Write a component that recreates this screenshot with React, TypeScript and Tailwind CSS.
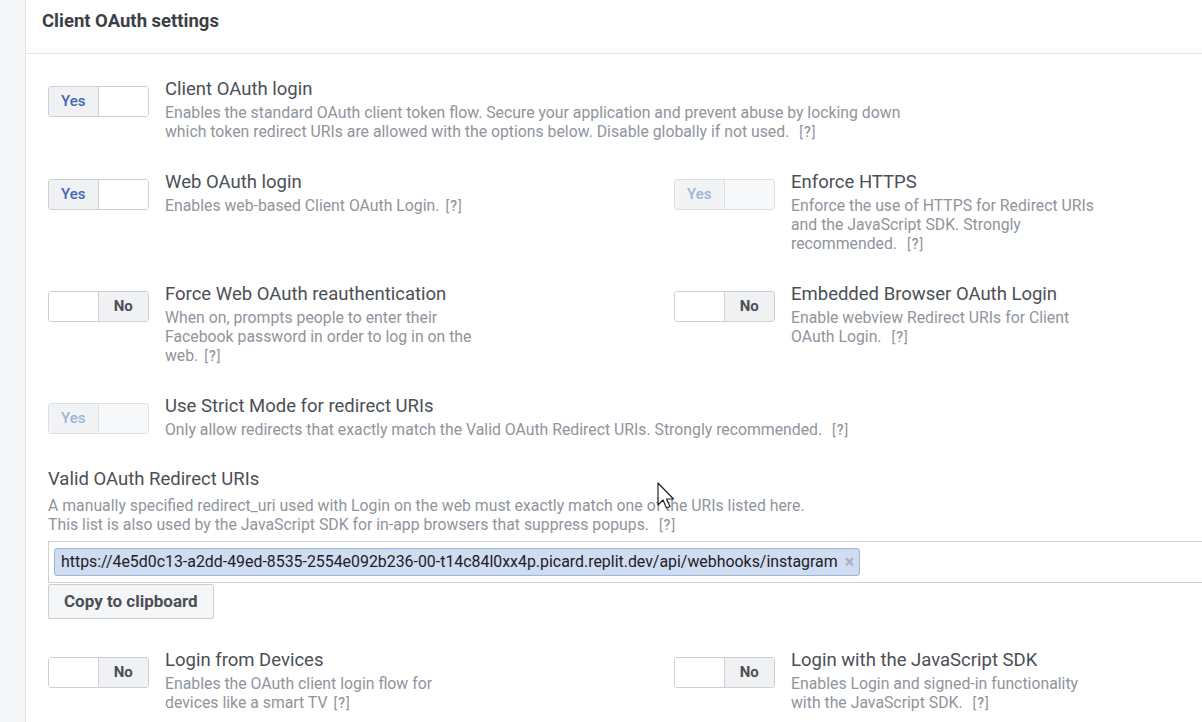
import React from "react";

function Help() {
  return <span className="ml-[6px] text-[14px] tracking-[1px] text-[#90949c]">[<span className="font-medium">?</span>]</span>;
}

function Toggle({ on, disabled }: { on: boolean; disabled?: boolean }) {
  const border = disabled ? "border-[#dddfe2]" : "border-[#ccd0d5]";
  const activeBg = disabled ? "bg-[#f2f3f5]" : "bg-[#f0f1f3]";
  const yesColor = disabled ? "text-[#9cb4d8]" : "text-[#4267b2]";
  return (
    <div className={`flex h-[31px] w-[101px] shrink-0 overflow-hidden rounded-[3px] border ${border} bg-white`}>
      {on ? (
        <>
          <div className={`flex w-1/2 items-center justify-center border-r ${border} ${activeBg} text-[15px] font-medium ${yesColor}`}>Yes</div>
          <div className={`w-1/2 ${disabled ? "bg-[#f7f8fa]" : "bg-white"}`} />
        </>
      ) : (
        <>
          <div className={`w-1/2 border-r ${border} bg-white`} />
          <div className={`flex w-1/2 items-center justify-center ${activeBg} text-[15px] font-bold text-[#4b4f56]`}>No</div>
        </>
      )}
    </div>
  );
}

function Setting({
  title,
  desc,
  on,
  disabled,
  width = "w-[318px]",
}: {
  title: string;
  desc: React.ReactNode;
  on: boolean;
  disabled?: boolean;
  width?: string;
}) {
  return (
    <div className="flex">
      <div className="pt-[8px]">
        <Toggle on={on} disabled={disabled} />
      </div>
      <div className={`ml-[16px] ${width}`}>
        <div className="text-[18.5px] leading-[22px] text-[#4b4f56]">{title}</div>
        <div className="mt-[3px] text-[15.8px] leading-[19px] text-[#90949c]">
          {desc}
          <Help />
        </div>
      </div>
    </div>
  );
}

export default function App() {
  return (
    <div
      className="relative flex h-[722px] w-[1202px] overflow-hidden bg-white"
      style={{ fontFamily: "Roboto, 'Liberation Sans', Arial, sans-serif" }}
    >
      <div className="h-full w-[26px] shrink-0 border-r border-[#e5e6e9] bg-[#f5f6f7]" />
      <div className="flex min-w-0 flex-1 flex-col">
        <div className="h-[54px] shrink-0 border-b border-[#e5e6e9] pl-[16px] pt-[10px]">
          <div className="text-[18.5px] font-bold leading-[22px] text-[#3b3f46]">Client OAuth settings</div>
        </div>
        <div className="flex flex-col pl-[22px] pt-[24px]">
          <div className="flex flex-col gap-[29px]">
            <Setting
              on
              title="Client OAuth login"
              width="w-[760px]"
              desc="Enables the standard OAuth client token flow. Secure your application and prevent abuse by locking down which token redirect URIs are allowed with the options below. Disable globally if not used. "
            />
            <div className="grid grid-cols-[626px_1fr]">
              <Setting on title="Web OAuth login" desc="Enables web-based Client OAuth Login." />
              <Setting
                on
                disabled
                width="w-[316px]"
                title="Enforce HTTPS"
                desc="Enforce the use of HTTPS for Redirect URIs and the JavaScript SDK. Strongly recommended. "
              />
            </div>
            <div className="grid grid-cols-[626px_1fr]">
              <Setting
                on={false}
                title="Force Web OAuth reauthentication"
                desc="When on, prompts people to enter their Facebook password in order to log in on the web."
              />
              <Setting
                on={false}
                width="w-[316px]"
                title="Embedded Browser OAuth Login"
                desc="Enable webview Redirect URIs for Client OAuth Login. "
              />
            </div>
            <Setting
              on
              disabled
              title="Use Strict Mode for redirect URIs"
              width="w-[760px]"
              desc="Only allow redirects that exactly match the Valid OAuth Redirect URIs. Strongly recommended. "
            />
          </div>

          <div className="mt-[28px] text-[18.5px] leading-[22px] text-[#4b4f56]">Valid OAuth Redirect URIs</div>
          <div className="mt-[6px] text-[15.8px] leading-[19px] text-[#90949c]">
            A manually specified redirect_uri used with Login on the web must exactly match one of the URIs listed here.
            <br />
            This list is also used by the JavaScript SDK for in-app browsers that suppress popups. <Help />
          </div>
          <div className="mt-[6px] flex h-[42px] w-[1200px] items-center border-y border-l border-[#ccd0d5] bg-white pl-[5px]">
            <div className="flex h-[28px] items-center rounded-[3px] border border-[#9cb4d8] bg-[#d0dcf0] pl-[6px] pr-[5px] text-[15.9px] text-[#1d2129]">
              <span>https://4e5d0c13-a2dd-49ed-8535-2554e092b236-00-t14c84l0xx4p.picard.replit.dev/api/webhooks/instagram</span>
              <span className="ml-[7px] text-[18px] font-bold leading-none text-[#a7b1c2]">×</span>
            </div>
          </div>
          <div className="mt-[1px]">
            <button className="h-[35px] rounded-[2px] border border-[#ccd0d5] bg-[#f5f6f7] px-[15px] text-[17px] font-bold text-[#4b4f56]">
              Copy to clipboard
            </button>
          </div>

          <div className="mt-[30px] grid grid-cols-[626px_1fr]">
            <Setting
              on={false}
              title="Login from Devices"
              desc="Enables the OAuth client login flow for devices like a smart TV"
            />
            <Setting
              on={false}
              width="w-[316px]"
              title="Login with the JavaScript SDK"
              desc="Enables Login and signed-in functionality with the JavaScript SDK. "
            />
          </div>
        </div>
      </div>

      <svg className="absolute left-[657px] top-[482px]" width="20" height="30" viewBox="0 0 20 30">
        <path
          d="M1 1 L1 23 L6 18 L9.5 26 L13 24.5 L9.5 17 L16.5 17 Z"
          fill="white"
          stroke="#222"
          strokeWidth="1.2"
          strokeLinejoin="round"
        />
      </svg>
    </div>
  );
}
